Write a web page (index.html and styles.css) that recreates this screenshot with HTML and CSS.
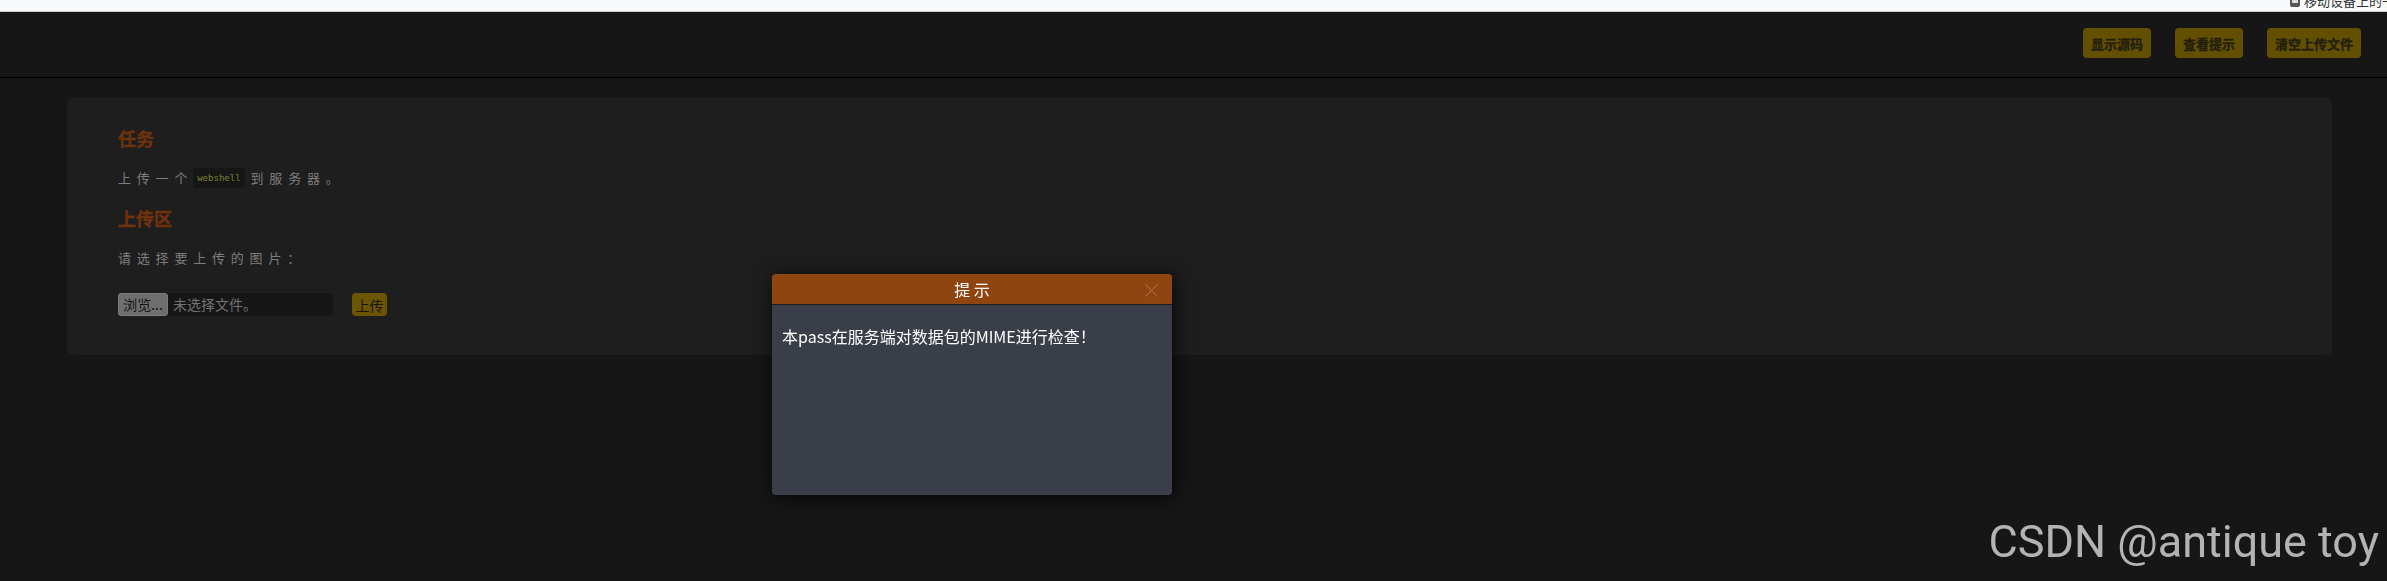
FILE: index.html
```html
<!DOCTYPE html>
<html lang="zh-CN">
<head>
    <meta charset="UTF-8">
    <meta name="viewport" content="width=device-width, initial-scale=1.0">
    <title>upload-labs</title>
    <link rel="stylesheet" href="styles.css">
</head>
<body>
    <!-- bookmark bar, cut off -->
    <div class="bookmarks">
        <span class="bookmark">
            <svg class="bm-icon" width="12" height="14" viewBox="0 0 12 14"><rect x="1" y="1" width="10" height="12" rx="2" fill="#555"/><rect x="3" y="3" width="6" height="6" fill="#ddd"/></svg>
            移动设备上的书签
        </span>
    </div>

    <!-- header -->
    <div class="header">
        <button class="btn">显示源码</button>
        <button class="btn">查看提示</button>
        <button class="btn">清空上传文件</button>
    </div>

    <!-- main card -->
    <div class="card">
        <h3>任务</h3>
        <p class="desc">上传一个<code>webshell</code>到服务器。</p>

        <h3 class="upload-title">上传区</h3>
        <p class="desc">请选择要上传的图片：</p>

        <form class="upload-form">
            <div class="file-box">
                <span class="browse">浏览...</span>
                <span class="file-name">未选择文件。</span>
            </div>
            <button type="button" class="btn-upload">上传</button>
        </form>
    </div>

    <!-- tip dialog -->
    <div class="dialog">
        <div class="dialog-title">
            提 示
            <svg class="dialog-close" width="13" height="13" viewBox="0 0 13 13"><path d="M0.5 0.5L12.5 12.5M12.5 0.5L0.5 12.5" stroke="#b07552" stroke-width="1"/></svg>
        </div>
        <div class="dialog-body">本pass在服务端对数据包的MIME进行检查！</div>
    </div>

    <div class="watermark">CSDN @antique toy</div>
</body>
</html>
```

FILE: styles.css
```css
html, body {
    height: 100%;
}

body {
    margin: 0;
    background-color: #161616;
    font-family: "Noto Sans CJK SC", "Liberation Sans", sans-serif;
    overflow: hidden;
}

.bookmarks {
    height: 11px;
    background-color: #f8f9fb;
    border-bottom: 1px solid #cfcfcf;
    overflow: hidden;
    display: flex;
    justify-content: flex-end;
}

.bookmark {
    display: flex;
    align-items: center;
    gap: 3px;
    margin-top: -9px;
    margin-right: -21px;
    font-size: 13px;
    line-height: 14px;
    color: #333;
    white-space: nowrap;
}

.header {
    height: 66px;
    border-bottom: 1px solid #000;
    display: flex;
    justify-content: flex-end;
    align-items: flex-start;
    gap: 24px;
    padding: 16px 26px 0 0;
    box-sizing: border-box;
}

.btn {
    height: 30px;
    padding: 0 8px;
    background-color: #634f00;
    color: #231f10;
    border: none;
    border-radius: 4px;
    font-family: inherit;
    font-size: 13px;
    font-weight: 700;
    -webkit-text-stroke: 0.3px #231f10;
    cursor: pointer;
}

.card {
    margin: 20px 55px 0 67px;
    padding: 28px 51px 39px;
    background-color: #1e1e1e;
    border-radius: 6px;
}

h3 {
    margin: 0;
    font-size: 18px;
    font-weight: 700;
    line-height: 24px;
    color: #6f320b;
    -webkit-text-stroke: 0.4px #6f320b;
}

.upload-title {
    margin-top: 18px;
}

.desc {
    margin: 18px 0 0;
    font-size: 13px;
    line-height: 20px;
    letter-spacing: 5.8px;
    color: #7d7d7d;
}

code {
    display: inline-block;
    margin-right: 6px;
    padding: 0 4px;
    background-color: #161616;
    border-radius: 4px;
    font-family: "DejaVu Sans Mono", monospace;
    font-size: 9px;
    line-height: 20px;
    letter-spacing: 0;
    color: #7a822e;
    vertical-align: top;
}

.upload-form {
    display: flex;
    align-items: center;
    gap: 19px;
    margin-top: 24px;
}

.file-box {
    display: flex;
    align-items: center;
    width: 215px;
    height: 23px;
    background-color: #161616;
    border-radius: 4px;
    font-size: 14px;
}

.browse {
    height: 23px;
    width: 50px;
    box-sizing: border-box;
    line-height: 21px;
    text-align: center;
    background-color: #6e6e6e;
    border: 1px solid #7d7d7d;
    border-radius: 3px;
    color: #141414;
}

.file-name {
    margin-left: 5px;
    color: #737373;
}

.btn-upload {
    height: 23px;
    width: 35px;
    padding: 0;
    margin-top: 1px;
    background-color: #6b5500;
    color: #161616;
    border: none;
    border-radius: 4px;
    font-family: inherit;
    font-size: 14px;
}

.dialog {
    position: fixed;
    left: 772px;
    top: 274px;
    width: 400px;
    height: 221px;
    background-color: #3a3e48;
    border-radius: 4px;
    box-shadow: 2px 2px 20px rgba(0, 0, 0, 0.8);
    overflow: hidden;
}

.dialog-title {
    position: relative;
    height: 30px;
    line-height: 30px;
    background-color: #8f4510;
    border-bottom: 1px solid #1c1c1c;
    text-align: center;
    color: #fff;
    font-size: 16px;
}

.dialog-close {
    position: absolute;
    right: 14px;
    top: 10px;
}

.dialog-body {
    padding: 19px 10px;
    font-size: 16px;
    line-height: 24px;
    color: #fff;
}

.watermark {
    position: fixed;
    right: 8px;
    top: 519px;
    font-family: Roboto, "Liberation Sans", sans-serif;
    font-size: 45px;
    line-height: 46px;
    color: #b3b3b3;
    white-space: nowrap;
}
```
